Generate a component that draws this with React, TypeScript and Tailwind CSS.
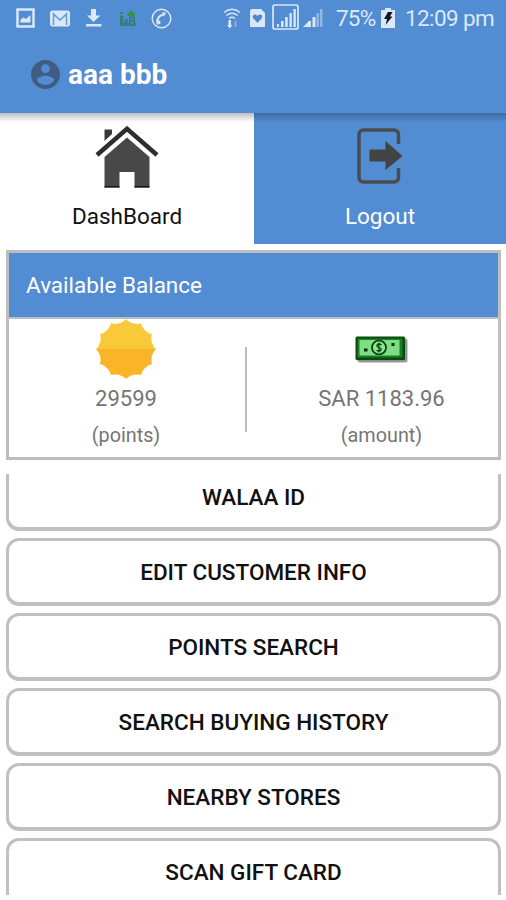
import type { ReactNode } from "react";

const menuItems = [
  "WALAA ID",
  "EDIT CUSTOMER INFO",
  "POINTS SEARCH",
  "SEARCH BUYING HISTORY",
  "NEARBY STORES",
  "SCAN GIFT CARD",
];

function SunIcon() {
  const points = Array.from({ length: 12 }, (_, i) => {
    const at = (r: number, deg: number) => {
      const a = (deg * Math.PI) / 180;
      return `${(30 + r * Math.sin(a)).toFixed(2)} ${(30 - r * Math.cos(a)).toFixed(2)}`;
    };
    return `${i === 0 ? `M${at(29.8, 0)}` : ""}Q${at(24.5, i * 30 + 15)} ${at(29.8, i * 30 + 30)}`;
  }).join("");

  return (
    <svg width="60" height="60" viewBox="0 0 60 60">
      <clipPath id="lower">
        <rect x="0" y="30" width="60" height="30" />
      </clipPath>
      <path d={points} fill="#f8ca3a" />
      <path d={points} fill="#f9b428" clipPath="url(#lower)" />
    </svg>
  );
}

function MoneyIcon() {
  return (
    <svg className="mt-0.5" width="54" height="28" viewBox="0 0 54 28">
      <rect x="3" y="3" width="50" height="24" rx="2" fill="#000" opacity="0.18" />
      <rect x="2" y="2" width="50" height="24" rx="2" fill="#000" opacity="0.3" />
      <rect x="0.5" y="0.5" width="49.5" height="23.5" rx="1.5" fill="#064d0b" />
      <rect x="2.5" y="2.5" width="45" height="19" fill="#1f7a2a" />
      <rect x="4.5" y="4" width="40" height="15.5" fill="#7fdd83" />
      <circle cx="24" cy="11.5" r="7" fill="#8be78e" stroke="#083c0c" strokeWidth="1.7" />
      <path d="M26.500 9q-2.500-2-4.500 0q-.7 1.700 2 2.500q3 1 2 2.700q-2 1.800-4.500 0M24 6.500v10" fill="none" stroke="#083c0c" strokeWidth="1.200" />
      <rect x="9" y="12.500" width="3.500" height="3" fill="#06300a" />
      <rect x="36.500" y="7" width="3" height="3" fill="#06300a" />
    </svg>
  );
}

function StatusBar() {
  return (
    <div className="flex h-9 items-center pl-4 text-[#dbe8f9]">
      <svg width="19" height="20" viewBox="0 0 19 20">
        <path d="M1.500 1.500h16v17h-16z" fill="none" stroke="currentColor" strokeWidth="2.500" />
        <path d="M4.500 14.500v-3l3-2 2.500 1.500 4.500-4v7.500z" fill="currentColor" />
      </svg>
      <svg className="ml-[15px]" width="20" height="17" viewBox="0 0 20 17">
        <rect x="0" y="0.500" width="20" height="16" rx="2.500" fill="currentColor" />
        <path d="M3.500 15V4l6.500 6 6.500-6v11" fill="none" stroke="#6e9fdc" strokeWidth="1.700" />
      </svg>
      <svg className="ml-4" width="16" height="18" viewBox="0 0 16 18">
        <path d="M5 0h5v6.500h4.500L7.500 13 1 6.500h4zM0 15h15.500v2.600H0z" fill="currentColor" />
      </svg>
      <svg className="ml-[18px]" width="17" height="17" viewBox="0 0 17 17">
        <path d="M0 2h3v2H0zM0 5.500h3.500V16H0zM5 9h2.500v7H5zM9 6.500h6V16H9z" fill="#347f78" />
        <path d="M3 12.500h13V16H3z" fill="#347f78" opacity="0.700" />
        <path d="M7.500 4 11 .5 15 3.500V6H7.500z" fill="#35924e" />
        <path d="M10.500 8.500h3v1.500h-3zM10.500 12h3v1.500h-3z" fill="#528cd3" />
      </svg>
      <svg className="ml-[14px]" width="21" height="21" viewBox="0 0 21 21">
        <circle cx="10.500" cy="10.500" r="9.300" fill="none" stroke="currentColor" strokeWidth="1.400" />
        <path d="M6.500 15.500Q5 9 12 6.500" fill="none" stroke="currentColor" strokeWidth="2.200" />
        <path d="m11 4 4 .8-2 4zM5.500 13l3.500-.5.5 3-3 1.500z" fill="currentColor" />
      </svg>
      <svg className="ml-[51px]" width="18" height="21" viewBox="0 0 18 21">
        <g fill="none" stroke="currentColor" strokeWidth="1.500">
          <path d="M1 4.500q8-6.500 16 0M3.500 7.500q5.500-4.500 11 0M6 10.500q3-2.500 6 0" />
          <path d="M12.500 19v-6" opacity="0.500" />
        </g>
        <path d="M5.500 12h2.500v5h1.500L6.800 20.500 4 17h1.500z" fill="currentColor" />
      </svg>
      <svg className="ml-[9px]" width="15" height="18" viewBox="0 0 15 18">
        <path d="M2 0h9l4 4v14H0V2q0-2 2-2z" fill="currentColor" />
        <path d="M7.500 14 3 9q-1-3 1.500-3.500Q6.500 5 7.500 7q1-2 3-1.500Q13 6 12 9z" fill="#4f87ce" />
      </svg>
      <svg className="-mt-0.5 ml-[7px]" width="27" height="26" viewBox="0 0 27 26">
        <rect x="1" y="1" width="25" height="24" rx="2" fill="none" stroke="currentColor" strokeWidth="1.700" />
        <path d="M5 20h2v3H5zM9 17h2.500v6H9zM13.200 13h2.500v10h-2.500zM17.500 9h2.300v14h-2.300zM21.500 5h2.300v18h-2.300z" fill="currentColor" />
      </svg>
      <svg className="ml-1" width="20" height="20" viewBox="0 0 20 20">
        <path d="M0 19 6 13v6zM5 13h3v6H5zM9.500 9h3v10h-3z" fill="currentColor" />
        <path d="M13.500 5h2.500v14h-2.500zM17 1h2.500v18H17z" fill="currentColor" opacity="0.450" />
      </svg>
      <span className="ml-[13px] w-[40px] text-[22.500px] leading-9 tracking-[-0.8px]">75%</span>
      <svg className="ml-[5px]" width="14" height="20" viewBox="0 0 14 20">
        <path d="M4 0h6v2h4v18H0V2h4z" fill="currentColor" />
        <path d="M7 4h4.500L9 8.500h2.500L4.500 17l1.500-6H3z" fill="#14171c" />
      </svg>
      <span className="ml-[10px] whitespace-nowrap text-[22.500px] leading-9 tracking-[-0.6px]">
        12:09 pm
      </span>
    </div>
  );
}

function Header() {
  return (
    <header className="h-[113px] bg-[#528cd3]">
      <StatusBar />
      <div className="flex h-[77px] items-center gap-2 pl-[31px]">
        <svg width="29" height="29" viewBox="2 2 20 20">
          <path
            d="M12 2C6.480 2 2 6.480 2 12s4.480 10 10 10 10-4.480 10-10S17.520 2 12 2zm0 3c1.660 0 3 1.340 3 3s-1.340 3-3 3-3-1.340-3-3 1.340-3 3-3zm0 14.200c-2.500 0-4.710-1.280-6-3.220.03-1.990 4-3.080 6-3.080 1.990 0 5.970 1.090 6 3.080-1.290 1.940-3.500 3.220-6 3.220z"
            fill="#3f5d83"
          />
        </svg>
        <h1 className="text-[28px] font-bold text-white">aaa bbb</h1>
      </div>
    </header>
  );
}

function Tabs() {
  return (
    <nav className="relative flex h-[131px] text-[22.500px] leading-7">
      <div className="flex w-[254px] flex-col items-center pt-[13px] text-[#111]">
        <svg width="64" height="62" viewBox="0 0 64 62">
          <path d="M9.500 3.500h7.500v4.500l-7.500 7z" fill="#393939" />
          <path d="M2 29 32 2.800 62 29" fill="none" stroke="#2e2e2e" strokeWidth="4.500" />
          <path d="M32 11.500 54.500 31v30.500h-15V46h-15v15.500h-15V31z" fill="#484848" />
          <path d="M9.500 60.700h15M39.500 60.700h15" stroke="#171717" strokeWidth="1.600" />
        </svg>
        <span className="mt-3.5">DashBoard</span>
      </div>
      <div className="flex flex-1 flex-col items-center bg-[#528cd3] pt-[15px] text-white">
        <svg width="46" height="56" viewBox="0 0 46 56">
          <path d="M41.500 16V7q0-5-5-5H7Q2 2 2 7v42q0 5 5 5h29.500q5 0 5-5v-9" fill="none" stroke="#4a4c50" strokeWidth="3.500" />
          <path d="M13 21.500h15.500V13L45.500 28 28.500 42v-8.500H13q-.5 0-.5-1V22.500q0-1 .5-1z" fill="#434343" />
        </svg>
        <span className="mt-[18px]">Logout</span>
      </div>
      <div className="absolute inset-x-0 top-0 h-[9px] bg-linear-to-b from-black/25 to-transparent" />
    </nav>
  );
}

type BalanceProps = {
  icon: ReactNode;
  value: string;
  unit: string;
};

function Balance({ icon, value, unit }: BalanceProps) {
  return (
    <div className="flex flex-col items-center text-[#757575]">
      <div className="flex h-[60px] items-center">{icon}</div>
      <span className="mt-[5px] text-[22px] leading-[30px]">{value}</span>
      <span className="mt-2 text-[19.800px] leading-7">{unit}</span>
    </div>
  );
}

export default function App() {
  return (
    <div className="h-[900px] w-[506px] overflow-hidden bg-white font-[Roboto,sans-serif]">
      <Header />
      <Tabs />
      <section className="mx-1.5 mt-1.5 h-[210px] w-[495px] border-[3px] border-[#bdbdbd]">
        <h2 className="h-[66px] border-b-2 border-[#bdbdbd] bg-[#528cd3] pl-[17px] text-[22.500px] leading-[65px] text-white">
          Available Balance
        </h2>
        <div className="grid grid-cols-[234px_6px_1fr]">
          <Balance icon={<SunIcon />} value="29599" unit="(points)" />
          <div className="mx-auto mt-7 h-[85px] w-0.5 bg-[#bdbdbd]" />
          <div className="pl-4">
            <Balance icon={<MoneyIcon />} value="SAR 1183.96" unit="(amount)" />
          </div>
        </div>
      </section>
      <div className="mx-1.5 mt-3.5 h-[421px] w-[495px] overflow-hidden">
        <div className="-mt-[11px] flex flex-col gap-[7px]">
          {menuItems.map((item) => (
            <button
              key={item}
              className="h-[68px] shrink-0 rounded-[13px] border-[3px] border-b-4 border-[#c0c0c0] pt-[3px] text-[22.500px] font-medium text-[#111]"
            >
              {item}
            </button>
          ))}
        </div>
      </div>
    </div>
  );
}
